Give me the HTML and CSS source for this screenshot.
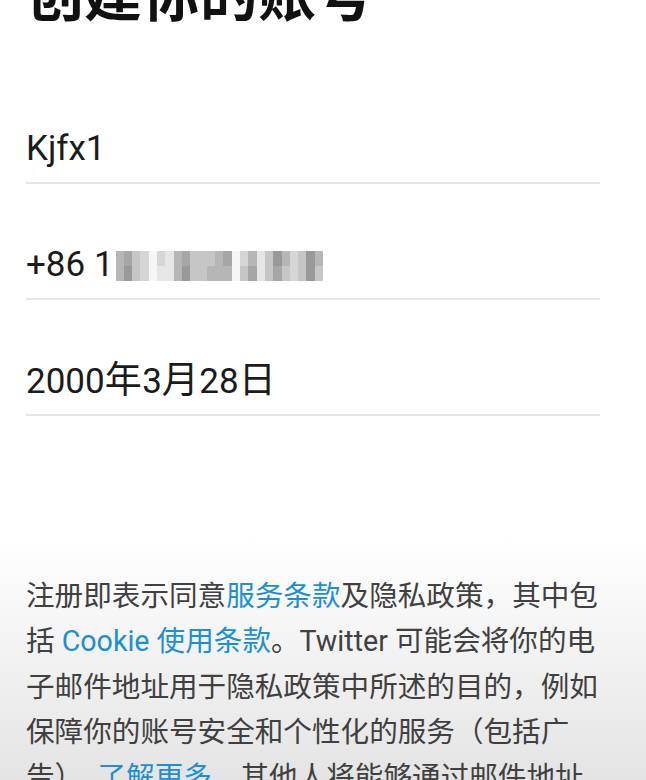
FILE: index.html
```html
<!DOCTYPE html>
<html lang="zh-CN">
<head>
<meta charset="utf-8">
<title>创建你的账号</title>
<link rel="stylesheet" href="styles.css">
</head>
<body>
<main class="screen">
  <h1 class="title">创建你的账号</h1>
  <div class="fields">
    <div class="field"><span class="value">Kjfx1</span></div>
    <div class="field">
      <span class="value">+86 1</span>
      <span class="mosaic" aria-hidden="true">
        <i class="g4"></i><i class="g5"></i><i class="g3"></i><i class="g2"></i><i class="g0"></i><i class="g2"></i><i class="g1"></i><i class="g4"></i><i class="g5"></i><i class="g3"></i><i class="g3"></i><i class="g3"></i><i class="g4"></i><i class="g5"></i><i class="g0"></i><i class="g2"></i><i class="g4"></i><i class="g1"></i><i class="g3"></i><i class="g6"></i><i class="g4"></i><i class="g2"></i><i class="g3"></i><i class="g6"></i><i class="g4"></i>
        <i class="g4"></i><i class="g6"></i><i class="g3"></i><i class="g2"></i><i class="g0"></i><i class="g1"></i><i class="g1"></i><i class="g4"></i><i class="g6"></i><i class="g3"></i><i class="g3"></i><i class="g4"></i><i class="g4"></i><i class="g4"></i><i class="g0"></i><i class="g3"></i><i class="g5"></i><i class="g1"></i><i class="g3"></i><i class="g5"></i><i class="g3"></i><i class="g2"></i><i class="g3"></i><i class="g6"></i><i class="g3"></i>
      </span>
    </div>
    <div class="field"><span class="value">2000<span class="cjk">年</span>3<span class="cjk">月</span>28<span class="cjk">日</span></span></div>
  </div>
  <p class="legal">注册即表示同意<a class="link">服务条款</a>及隐私政策，其中包括 <a class="link">Cookie 使用条款</a>。Twitter 可能会将你的电子邮件地址用于隐私政策中所述的目的，例如保障你的账号安全和个性化的服务（包括广告）。<a class="link">了解更多</a>。其他人将能够通过邮件地址或手机号码找到你。</p>
</main>
</body>
</html>
```
FILE: styles.css
```css
html, body {
  margin: 0;
  padding: 0;
}
body {
  width: 646px;
  height: 780px;
  overflow: hidden;
  background: linear-gradient(to bottom, #ffffff 0%, #ffffff 69%, #f2f2f2 84%, #e4e4e4 100%);
  font-family: Roboto, "Noto Sans CJK SC", sans-serif;
  color: #1a1a1a;
}
.screen {
  padding: 0 46px 0 26px;
}
.title {
  margin: -38px 0 0 0;
  font-family: "Noto Sans CJK SC", sans-serif;
  font-weight: 700;
  font-size: 58px;
  line-height: 58px;
  color: #111111;
}
.fields {
  margin-top: 48px;
  width: 574px;
}
.field {
  display: flex;
  align-items: center;
  padding: 60px 0 12px 0;
  height: 42px;
  border-bottom: 2px solid #e6e6e6;
}
.value {
  font-size: 35px;
  line-height: 42px;
  color: #1b1b1b;
  white-space: pre;
}
.cjk {
  font-size: 37px;
  letter-spacing: 0.5px;
}
.mosaic {
  display: grid;
  grid-template-columns: repeat(25, 8.3px);
  grid-template-rows: 15px 15px;
  margin-left: 2px;
  margin-top: 2px;
  filter: blur(0.7px);
}
.mosaic i { display: block; }
.g0 { background: #f6f6f6; }
.g1 { background: #e6e6e6; }
.g2 { background: #d6d6d6; }
.g3 { background: #c6c6c6; }
.g4 { background: #b6b6b6; }
.g5 { background: #a6a6a6; }
.g6 { background: #999999; }
.legal {
  margin: 158px 0 0 0;
  width: 576px;
  font-size: 28.6px;
  line-height: 45.3px;
  color: #404040;
}
.link {
  color: #1d8fd2;
  text-decoration: none;
}
```
